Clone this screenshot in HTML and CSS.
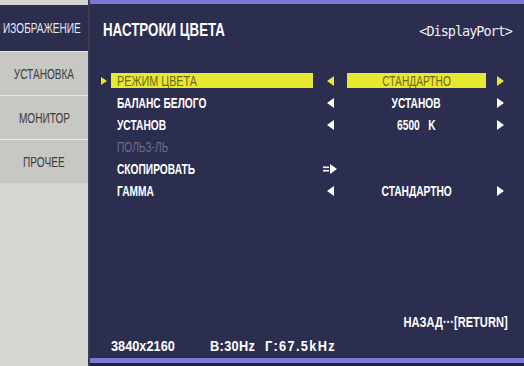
FILE: index.html
```html
<!DOCTYPE html>
<html lang="ru">
<head>
    <meta charset="UTF-8">
    <meta name="viewport" content="width=device-width, initial-scale=1.0">
    <title>Настроки цвета</title>
    <link rel="stylesheet" href="styles.css">
</head>
<body>
    <div class="screen">
        <!-- Вкладки слева -->
        <div class="sidebar">
            <div class="tab active"><span class="t">ИЗОБРАЖЕНИЕ</span></div>
            <div class="tab"><span class="t">УСТАНОВКА</span></div>
            <div class="tab"><span class="t">МОНИТОР</span></div>
            <div class="tab"><span class="t">ПРОЧЕЕ</span></div>
        </div>

        <div class="main">
            <div class="header">
                <h2><span class="t">НАСТРОКИ ЦВЕТА</span></h2>
                <span class="input">&lt;DisplayPort&gt;</span>
            </div>

            <div class="menu">
                <span class="pointer"><svg width="6" height="8" viewBox="0 0 6 8"><polygon points="0,0 6,4 0,8" fill="#e8e830"/></svg></span>
                <span class="label selected"><span class="t">РЕЖИМ ЦВЕТА</span></span>
                <span class="arrow"><svg width="7" height="10" viewBox="0 0 7 10"><polygon points="7,0 0,5 7,10" fill="#e8e830"/></svg></span>
                <span class="value selected"><span class="t">СТАНДАРТНО</span></span>
                <span class="arrow"><svg width="7" height="10" viewBox="0 0 7 10"><polygon points="0,0 7,5 0,10" fill="#e8e830"/></svg></span>

                <span class="pointer"></span>
                <span class="label"><span class="t">БАЛАНС БЕЛОГО</span></span>
                <span class="arrow"><svg width="7" height="10" viewBox="0 0 7 10"><polygon points="7,0 0,5 7,10" fill="#fff"/></svg></span>
                <span class="value"><span class="t">УСТАНОВ</span></span>
                <span class="arrow"><svg width="7" height="10" viewBox="0 0 7 10"><polygon points="0,0 7,5 0,10" fill="#fff"/></svg></span>

                <span class="pointer"></span>
                <span class="label"><span class="t">УСТАНОВ</span></span>
                <span class="arrow"><svg width="7" height="10" viewBox="0 0 7 10"><polygon points="7,0 0,5 7,10" fill="#fff"/></svg></span>
                <span class="value"><span class="t">6500&nbsp;&nbsp;&nbsp;K</span></span>
                <span class="arrow"><svg width="7" height="10" viewBox="0 0 7 10"><polygon points="0,0 7,5 0,10" fill="#fff"/></svg></span>

                <span class="pointer"></span>
                <span class="label disabled"><span class="t">ПОЛЬЗ-ЛЬ</span></span>
                <span class="arrow"></span>
                <span class="value"></span>
                <span class="arrow"></span>

                <span class="pointer"></span>
                <span class="label"><span class="t">СКОПИРОВАТЬ</span></span>
                <span class="arrow"><svg width="14" height="10" viewBox="0 0 14 10"><rect x="0" y="2.5" width="6" height="1.6" fill="#fff"/><rect x="0" y="5.9" width="6" height="1.6" fill="#fff"/><polygon points="7,0 14,5 7,10" fill="#fff"/></svg></span>
                <span class="value"></span>
                <span class="arrow"></span>

                <span class="pointer"></span>
                <span class="label"><span class="t">ГАММА</span></span>
                <span class="arrow"><svg width="7" height="10" viewBox="0 0 7 10"><polygon points="7,0 0,5 7,10" fill="#fff"/></svg></span>
                <span class="value"><span class="t">СТАНДАРТНО</span></span>
                <span class="arrow"><svg width="7" height="10" viewBox="0 0 7 10"><polygon points="0,0 7,5 0,10" fill="#fff"/></svg></span>
            </div>

            <div class="back"><span class="t">НАЗАД···[RETURN]</span></div>

            <div class="status">
                <span class="res"><span class="t">3840x2160</span></span>
                <span class="freq"><span class="t">В:30Hz</span></span>
                <span class="hfreq"><span class="t">Г:67.5kHz</span></span>
            </div>
        </div>
    </div>
</body>
</html>
```

FILE: styles.css
```css
* {
    box-sizing: border-box;
}

body {
    margin: 0;
    padding: 0;
    background-color: #22243a;
    font-family: "Liberation Sans", Arial, sans-serif;
}

/* экранный шрифт монитора узкий, поэтому сжимаем текст по горизонтали */
.t {
    display: inline-block;
    white-space: nowrap;
    transform: scaleX(0.68);
    transform-origin: left center;
}

.screen {
    display: flex;
    width: 524px;
    height: 366px;
}

.sidebar {
    width: 90px;
    padding-top: 5px;
    background-color: #d5d5d1;
    border-right: 2px solid #3a3c4c;
}

.tab {
    height: 44px;
    display: flex;
    align-items: center;
    justify-content: center;
    background-color: #c7c7c3;
    border-top: 1px solid #e6e6e2;
    color: #3c3c3c;
    font-size: 14px;
}

.tab .t {
    transform: scaleX(0.72);
    transform-origin: center;
}

.tab.active {
    height: 46px;
    background-color: #2c2e4f;
    border-top: none;
    color: #e8e8ee;
    padding-right: 4px;
}

.main {
    flex: 1;
    display: flex;
    flex-direction: column;
    background-color: #2c2e4f;
    border-top: 4px solid #7b78d6;
    border-bottom: 5px solid #7b78d6;
    margin-bottom: 3px;
    color: #fff;
}

.header {
    display: flex;
    justify-content: space-between;
    align-items: baseline;
    padding: 16px 14px 0 13px;
    height: 69px;
}

h2 {
    margin: 0;
    font-size: 18px;
    font-weight: bold;
    color: #fff;
}

h2 .t {
    transform: scaleX(0.74);
}

.input {
    font-family: "DejaVu Sans Mono", monospace;
    font-size: 13.5px;
    letter-spacing: -1px;
    margin-right: -2px;
    color: #f0f0f4;
}

.menu {
    display: grid;
    grid-template-columns: 10px 202px 34px 139px 28px;
    grid-auto-rows: 22px;
    padding-left: 11px;
    font-size: 15px;
    font-weight: bold;
}

.pointer,
.arrow {
    display: flex;
    align-items: center;
    justify-content: center;
    height: 15px;
}

.pointer {
    justify-content: flex-start;
}

.label,
.value {
    height: 15px;
    line-height: 15px;
    overflow: hidden;
}

.label {
    padding-left: 6px;
}

.value {
    text-align: center;
}

.value .t {
    transform-origin: center;
}

.selected {
    background-color: #e8e830;
    color: #6a6a1c;
    font-weight: normal;
}

.label.selected .t {
    transform: scaleX(0.72);
}

.disabled {
    color: #6a6d88;
    font-weight: normal;
}

.back {
    margin-top: auto;
    text-align: right;
    padding-right: 16px;
    font-size: 15px;
    font-weight: bold;
}

.back .t {
    transform: scaleX(0.74);
    transform-origin: right center;
}

.status {
    display: flex;
    padding: 7px 0 4px 21px;
    font-size: 15px;
    font-weight: bold;
}

.status .t {
    transform: scaleX(0.85);
}

.status .res {
    width: 99px;
}

.status .freq {
    width: 55px;
    letter-spacing: 0.4px;
}

.status .hfreq {
    letter-spacing: 1.6px;
}
```
